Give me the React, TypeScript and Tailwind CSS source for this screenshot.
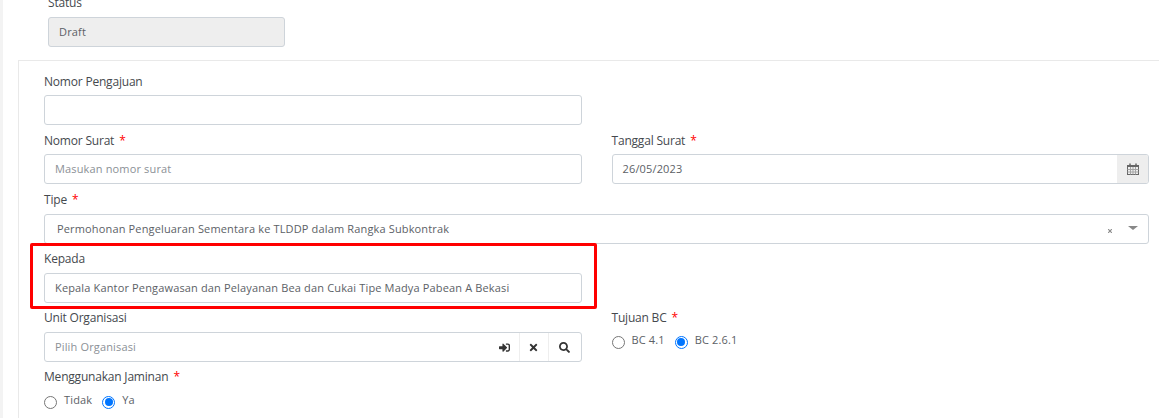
import { FaSearch, FaSignInAlt, FaTimes } from "react-icons/fa";

const labelBase = "block text-[12px] leading-[16px] font-medium tracking-[-0.2px] text-[#45494e]";
const textCls = "text-[11px] tracking-[0.15px] pt-[1px]";
const inputCls = `flex h-[30px] items-center rounded-[3px] border border-[#ced4da] bg-white px-[10px] text-[#5c6166] ${textCls}`;

function Field({
  label,
  required,
  tall,
  children,
}: {
  label: string;
  required?: boolean;
  tall?: boolean;
  children: React.ReactNode;
}) {
  return (
    <div className={tall ? "mb-[7px]" : "mb-[8px]"}>
      <label className={`${labelBase} ${tall ? "h-[22px]" : "h-[21px]"}`}>
        {label}
        {required && <span className="ml-[5px] text-[#ff0000]">*</span>}
      </label>
      {children}
    </div>
  );
}

function Radio({ text, checked }: { text: string; checked?: boolean }) {
  return (
    <span className="flex items-center gap-[7px] text-[11px] tracking-[0.15px] text-[#5c6166]">
      {checked ? (
        <span className="flex h-[13px] w-[13px] items-center justify-center rounded-full border border-[#0075ff]">
          <span className="h-[8px] w-[8px] rounded-full bg-[#0075ff]" />
        </span>
      ) : (
        <span className="h-[13px] w-[13px] rounded-full border border-[#767676]" />
      )}
      <span className="relative top-[-2px]">{text}</span>
    </span>
  );
}

function CalendarIcon() {
  return (
    <svg width="12" height="12" viewBox="0 0 12 12" fill="none" stroke="#666" strokeWidth="1">
      <rect x="0.5" y="2.5" width="11" height="9" />
      <path d="M0.5 3.5H11.5" />
      <path d="M0.5 6.5H11.5M0.5 9H11.5M3.5 4V11.5M6 4V11.5M8.5 4V11.5" stroke="#a5a5a5" />
      <path d="M3 0.5V2.5M9 0.5V2.5" strokeWidth="1.5" />
    </svg>
  );
}

export default function App() {
  return (
    <div className="h-[418px] w-[1159px] overflow-hidden bg-white font-['Open_Sans',sans-serif]">
      <div className="flex h-full">
        <div className="w-[3px] shrink-0 bg-[#f3f3f3]" />
        <div className="flex-1">
          <div className="ml-[45px] flex h-[60px] flex-col">
            <div className="h-[17px]">
              <div className={`${labelBase} relative top-[-5px]`}>Status</div>
            </div>
            <div className={`flex h-[30px] w-[237px] items-center rounded-[3px] border border-[#ced4da] bg-[#eeeeee] px-[10px] text-[#5c6166] ${textCls}`}>
              Draft
            </div>
          </div>

          <div className="relative ml-[15px] h-[358px] border-t border-l border-[#e9e9e9] pt-[13px] pr-[10px] pl-[25px]">
            <div className="grid grid-cols-2 gap-x-[30px]">
              <Field label="Nomor Pengajuan">
                <div className={inputCls} />
              </Field>
              <div />
              <Field label="Nomor Surat" required>
                <div className={`flex h-[30px] items-center rounded-[3px] border border-[#ced4da] bg-white px-[10px] text-[#8b9096] ${textCls}`}>
                  Masukan nomor surat
                </div>
              </Field>
              <Field label="Tanggal Surat" required>
                <div className="flex h-[30px] items-stretch overflow-hidden rounded-[3px] border border-[#ced4da] text-[#5c6166]">
                  <div className={`flex flex-1 items-center px-[10px] ${textCls}`}>26/05/2023</div>
                  <div className="flex w-[31px] items-center justify-center bg-[#eeeeee]">
                    <CalendarIcon />
                  </div>
                </div>
              </Field>
              <div className="col-span-2">
                <div className="mb-[7px]">
                  <label className={`${labelBase} h-[22px]`}>
                    Tipe<span className="ml-[5px] text-[#ff0000]">*</span>
                  </label>
                  <div className={`${inputCls} justify-between pr-[10px] pl-[12px]`}>
                    <span>Permohonan Pengeluaran Sementara ke TLDDP dalam Rangka Subkontrak</span>
                    <span className="flex items-center gap-[15px]">
                      <FaTimes size={6} className="mt-[3px] text-[#888]" />
                      <span className="mb-[3px] h-0 w-0 border-x-[5px] border-t-[4px] border-x-transparent border-t-[#888]" />
                    </span>
                  </div>
                </div>
              </div>
              <Field label="Kepada" tall>
                <div className={inputCls}>
                  Kepala Kantor Pengawasan dan Pelayanan Bea dan Cukai Tipe Madya Pabean A Bekasi
                </div>
              </Field>
              <div />
              <Field label="Unit Organisasi" tall>
                <div className="flex h-[30px] items-stretch rounded-[3px] border border-[#ced4da] text-[#8b9096]">
                  <div className={`flex flex-1 items-center px-[10px] ${textCls}`}>Pilih Organisasi</div>
                  <div className="flex w-[29px] items-center justify-center border-r border-[#eeeeee]">
                    <FaSignInAlt size={11} className="text-[#333]" />
                  </div>
                  <div className="flex w-[29px] items-center justify-center border-r border-[#eeeeee]">
                    <FaTimes size={11} className="text-[#333]" />
                  </div>
                  <div className="flex w-[32px] items-center justify-center">
                    <FaSearch size={11} className="text-[#333]" />
                  </div>
                </div>
              </Field>
              <div>
                <label className={`${labelBase} h-[24px]`}>
                  Tujuan BC<span className="ml-[5px] text-[#ff0000]">*</span>
                </label>
                <div className="flex items-center gap-[10px]">
                  <Radio text="BC 4.1" />
                  <Radio text="BC 2.6.1" checked />
                </div>
              </div>
              <div>
                <label className={`${labelBase} h-[25px]`}>
                  Menggunakan Jaminan<span className="ml-[5px] text-[#ff0000]">*</span>
                </label>
                <div className="flex items-center gap-[10px]">
                  <Radio text="Tidak" />
                  <Radio text="Ya" checked />
                </div>
              </div>
            </div>
            {/* highlight box */}
            <div className="absolute top-[182px] left-[11px] h-[66px] w-[567px] rounded-[2px] border-[3px] border-[#ff0000]" />
          </div>
        </div>
      </div>
    </div>
  );
}
